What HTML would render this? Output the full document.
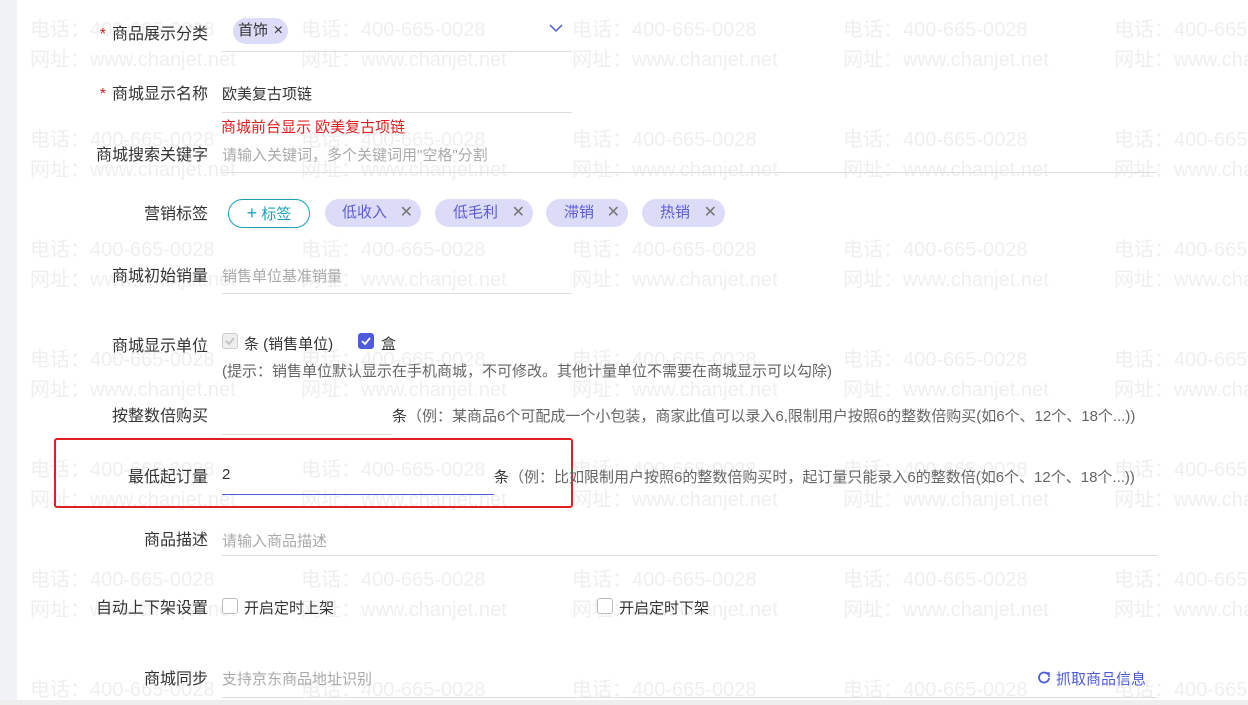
<!DOCTYPE html>
<html><head><meta charset="utf-8"><style>
body{margin:0;width:1248px;height:705px;overflow:hidden;background:#fff;font-family:"Liberation Sans","Noto Sans CJK SC",sans-serif;font-size:15px;color:#333;position:relative}
.a{position:absolute;white-space:nowrap}
.wm{position:absolute;color:#efefef;font-size:20px;white-space:nowrap;line-height:30px}
.lb{position:absolute;right:1040px;white-space:nowrap;line-height:20px;font-size:16px;margin-top:2px}
.st{color:#e02020;margin-right:6px}
.ul{position:absolute;height:1px;background:#ddd}
.ph{color:#aaa}
.tag{position:absolute;height:28px;border-radius:14px;background:#dcdcf8;color:#5b5bd6;line-height:28px;font-size:15px}
.tag i{font-style:normal;color:#777;position:absolute;right:8px;font-size:16px}
.cb{position:absolute;width:14px;height:14px;border:1px solid #bbb;border-radius:3px;background:#fff}
</style></head><body>
<div id="w" style="position:absolute;left:0;top:0;width:1248px;height:705px;overflow:hidden"></div>
<script>
var h='';var xs=[30,301,572,843,1114];var ys=[15,125,235,345,455,565,675];
ys.forEach(function(y){xs.forEach(function(x){h+='<div class="wm" style="left:'+x+'px;top:'+y+'px">电话：400-665-0028</div><div class="wm" style="left:'+x+'px;top:'+(y+30)+'px">网址：www.chanjet.net</div>';});});
document.getElementById('w').innerHTML=h;
</script>
<div class="a" style="left:0;top:0;width:17px;height:705px;background:#f0f2f5"></div>
<div class="a" style="left:0;top:700px;width:1248px;height:5px;background:#eee"></div>

<div class="lb" style="top:23px"><span class="st">*</span>商品展示分类</div>
<div class="tag" style="left:233px;top:18px;width:55px;height:26px;line-height:26px;background:#dcdcf8;color:#333"><span style="margin-left:5px">首饰</span><i style="color:#333;right:5px">×</i></div>
<svg class="a" style="left:548px;top:22px" width="16" height="12"><path d="M2 3 L8 9 L14 3" stroke="#4d5bdc" stroke-width="1.5" fill="none"/></svg>
<div class="ul" style="left:222px;top:51px;width:350px"></div>

<div class="lb" style="top:83px"><span class="st">*</span>商城显示名称</div>
<div class="a" style="left:222px;top:83px">欧美复古项链</div>
<div class="ul" style="left:222px;top:112px;width:350px"></div>
<div class="a" style="left:221px;top:116px;color:#e02020">商城前台显示 欧美复古项链</div>

<div class="lb" style="top:144px">商城搜索关键字</div>
<div class="a ph" style="left:222px;top:144px">请输入关键词，多个关键词用"空格"分割</div>
<div class="ul" style="left:222px;top:172px;width:935px"></div>

<div class="lb" style="top:203px">营销标签</div>
<div class="a" style="left:228px;top:199px;width:80px;height:27px;border:1.5px solid #1aa3b8;border-radius:15px;color:#1aa3b8;text-align:center;line-height:27px;font-size:15px"><span style="font-size:18px">+</span> 标签</div>
<div class="tag" style="left:325px;top:199px;width:96px"><span style="margin-left:17px">低收入</span><i>✕</i></div>
<div class="tag" style="left:435px;top:199px;width:98px"><span style="margin-left:18px">低毛利</span><i>✕</i></div>
<div class="tag" style="left:546px;top:199px;width:82px"><span style="margin-left:18px">滞销</span><i>✕</i></div>
<div class="tag" style="left:642px;top:199px;width:83px"><span style="margin-left:18px">热销</span><i>✕</i></div>

<div class="lb" style="top:265px">商城初始销量</div>
<div class="a ph" style="left:222px;top:265px">销售单位基准销量</div>
<div class="ul" style="left:222px;top:293px;width:350px"></div>

<div class="lb" style="top:335px">商城显示单位</div>
<div class="cb" style="left:222px;top:333px;background:#eee;border-color:#ccc"><svg width="14" height="14" style="position:absolute;left:0;top:0"><path d="M3 7 L6 10 L11 4" stroke="#bbb" stroke-width="1.6" fill="none"/></svg></div>
<div class="a" style="left:244px;top:333px">条 (销售单位)</div>
<div class="cb" style="left:358px;top:333px;background:#4d5bdc;border-color:#4d5bdc"><svg width="14" height="14" style="position:absolute;left:0;top:0"><path d="M3 7 L6 10 L11 4" stroke="#fff" stroke-width="1.8" fill="none"/></svg></div>
<div class="a" style="left:381px;top:333px">盒</div>
<div class="a" style="left:222px;top:360px;color:#666">(提示：销售单位默认显示在手机商城，不可修改。其他计量单位不需要在商城显示可以勾除)</div>

<div class="lb" style="top:405px">按整数倍购买</div>
<div class="ul" style="left:222px;top:434px;width:170px"></div>
<div class="a" style="left:392px;top:405px;color:#666"><span style="color:#333">条</span>（例：某商品6个可配成一个小包装，商家此值可以录入6,限制用户按照6的整数倍购买(如6个、12个、18个...))</div>

<div class="a" style="left:54px;top:438px;width:515px;height:66px;border:2px solid #e02020;border-radius:3px"></div>
<div class="lb" style="top:466px">最低起订量</div>
<div class="a" style="left:222px;top:466px">2</div>
<div class="a" style="left:222px;top:494px;width:272px;height:1px;background:#4d5bdc"></div>
<div class="a" style="left:494px;top:466px;color:#666"><span style="color:#333">条</span>（例：比如限制用户按照6的整数倍购买时，起订量只能录入6的整数倍(如6个、12个、18个...))</div>

<div class="lb" style="top:529px">商品描述</div>
<div class="a ph" style="left:222px;top:530px">请输入商品描述</div>
<div class="ul" style="left:222px;top:555px;width:935px"></div>

<div class="lb" style="top:597px">自动上下架设置</div>
<div class="cb" style="left:222px;top:598px"></div>
<div class="a" style="left:244px;top:597px">开启定时上架</div>
<div class="cb" style="left:597px;top:598px"></div>
<div class="a" style="left:619px;top:597px">开启定时下架</div>

<div class="lb" style="top:668px">商城同步</div>
<div class="a ph" style="left:222px;top:668px">支持京东商品地址识别</div>
<svg class="a" style="left:1037px;top:671px" width="14" height="14"><path d="M11 3.5 A5 5 0 1 0 12 7" stroke="#4d5bdc" stroke-width="1.8" fill="none"/><path d="M8 2 L12 2 L12 6" stroke="#4d5bdc" stroke-width="1.6" fill="none"/></svg>
<div class="a" style="left:1056px;top:668px;color:#4d5bdc">抓取商品信息</div>
<div class="ul" style="left:222px;top:697px;width:935px"></div>
</body></html>
